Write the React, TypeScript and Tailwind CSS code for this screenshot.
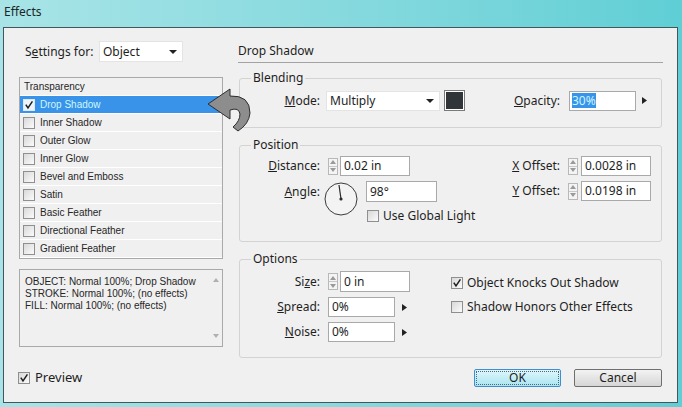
import React from 'react';

const effects = [
  'Drop Shadow',
  'Inner Shadow',
  'Outer Glow',
  'Inner Glow',
  'Bevel and Emboss',
  'Satin',
  'Basic Feather',
  'Directional Feather',
  'Gradient Feather',
];

function Check({ checked = false, light = false }: { checked?: boolean; light?: boolean }) {
  return (
    <span
      className={
        'flex w-[12px] h-[12px] shrink-0 items-center justify-center border ' +
        (light
          ? 'border-[#dfe9f3] bg-[#eef4fa]'
          : 'border-[#8e8f8f] bg-gradient-to-br from-[#d9d9d9] to-[#fbfbfb]')
      }
    >
      {checked && (
        <svg width="10" height="10" viewBox="0 0 10 10">
          <path d="M1.8 4.6 L4 8 L8.4 1.4" fill="none" stroke="#1f1f1f" strokeWidth="1.5" />
        </svg>
      )}
    </span>
  );
}

function Spinner() {
  return (
    <span className="flex flex-col w-[10px] h-[17px] border border-[#b8b8b8] bg-[#f4f4f4] shrink-0">
      <span className="flex flex-1 items-center justify-center border-b border-[#c8c8c8]">
        <svg width="6" height="4" viewBox="0 0 6 4">
          <path d="M0 4 L3 0 L6 4 Z" fill="#9a9a9a" />
        </svg>
      </span>
      <span className="flex flex-1 items-center justify-center">
        <svg width="6" height="4" viewBox="0 0 6 4">
          <path d="M0 0 L3 4 L6 0 Z" fill="#9a9a9a" />
        </svg>
      </span>
    </span>
  );
}

function Arrow() {
  return (
    <svg width="5" height="7" viewBox="0 0 5 7" className="shrink-0">
      <path d="M0 0 L5 3.5 L0 7 Z" fill="#222" />
    </svg>
  );
}

function Caret() {
  return (
    <svg width="8" height="4" viewBox="0 0 8 4" className="shrink-0">
      <path d="M0 0 L8 0 L4 4 Z" fill="#222" />
    </svg>
  );
}

function Field({ value, w, h = 'h-[20px]' }: { value: string; w: string; h?: string }) {
  return (
    <span className={`flex items-center ${w} ${h} border border-[#a9a9a9] bg-white pl-[3px] shrink-0`}>
      {value}
    </span>
  );
}

export default function App() {
  return (
    <div className="w-[682px] h-[407px] overflow-hidden bg-gradient-to-r from-[#a8e4e7] to-[#5fcfd5] font-['Noto_Sans',sans-serif] text-[12px] text-[#1e1e1e]">
      <div className="h-[27px] pl-[4px] pt-[4px] leading-[16px] text-[#1c2626]">Effects</div>

      <div className="relative ml-[3px] w-[675px] h-[376px] border border-[#43575a] bg-[#f0f0f0] pt-[13px] pl-[15px] pr-[14px]">
        <div className="flex gap-[15px] h-[328px]">
          {/* left column */}
          <div className="w-[204px] flex flex-col">
            <div className="flex items-center h-[21px]">
              <span className="w-[80px] pl-[6px]">
                S<span className="underline">e</span>ttings for:
              </span>
              <span className="flex items-center justify-between w-[84px] h-[21px] bg-white border border-[#e4e4e4] pl-[3px] pr-[5px]">
                Object
                <Caret />
              </span>
            </div>

            <div className="mt-[15px] border border-[#a9a9a9] bg-[#f0f0f0] font-['Liberation_Sans',sans-serif] text-[10px] text-[#262626]">
              <div className="flex items-center h-[18px] pl-[4px] border-b border-white">Transparency</div>
              {effects.map((name, i) => (
                <div
                  key={name}
                  className={
                    'flex items-center gap-[5px] h-[18px] pl-[3px] border-b border-white ' +
                    (i === 0 ? 'bg-[#3993e8] text-[#cdf7ff]' : '')
                  }
                >
                  <Check checked={i === 0} light={i === 0} />
                  {name}
                </div>
              ))}
            </div>

            <div className="mt-[10px] flex h-[78px] border border-[#a9a9a9] font-['Liberation_Sans',sans-serif] text-[10px] leading-[12px] text-[#262626]">
              <div className="flex-1 pl-[5px] pt-[6px]">
                <div>OBJECT: Normal 100%; Drop Shadow</div>
                <div>STROKE: Normal 100%; (no effects)</div>
                <div>FILL: Normal 100%; (no effects)</div>
              </div>
              <div className="flex flex-col justify-between items-center w-[12px] py-[8px]">
                <svg width="6" height="4" viewBox="0 0 6 4">
                  <path d="M0 4 L3 0 L6 4 Z" fill="#b0b0b0" />
                </svg>
                <svg width="6" height="4" viewBox="0 0 6 4">
                  <path d="M0 0 L3 4 L6 0 Z" fill="#b0b0b0" />
                </svg>
              </div>
            </div>
          </div>

          {/* right column */}
          <div className="w-[425px] flex flex-col">
            <div className="flex items-center h-[22px] pb-[1px] border-b border-[#a3a3a3]">Drop Shadow</div>

            <fieldset className="mt-[7px] mx-[1px] border border-[#d3d3d3] rounded-[3px] pt-[4px] pb-[16px]">
              <legend className="ml-[11px] px-[2px] leading-[16px]">Blending</legend>
              <div className="flex items-center h-[21px]">
                <span className="w-[80px] text-right">
                  <span className="underline">M</span>ode:
                </span>
                <span className="ml-[6px] flex items-center justify-between w-[114px] h-[20px] bg-white border border-[#e4e4e4] pl-[3px] pr-[5px]">
                  Multiply
                  <Caret />
                </span>
                <span className="ml-[4px] w-[21px] h-[21px] border border-[#7a7a7a] p-[1px] bg-white">
                  <span className="block w-full h-full bg-[#2f3539]" />
                </span>
                <span className="w-[95px] text-right">
                  <span className="underline">O</span>pacity:
                </span>
                <span className="ml-[9px] flex items-center w-[67px] h-[20px] border border-[#a9a9a9] bg-white pl-[2px]">
                  <span className="bg-[#3993e8] text-[#cdf7ff] leading-[15px]">30%</span>
                </span>
                <span className="ml-[6px]">
                  <Arrow />
                </span>
              </div>
            </fieldset>

            <fieldset className="mt-[9px] mx-[1px] border border-[#d3d3d3] rounded-[3px] pt-[3px] pb-[19px]">
              <legend className="ml-[11px] px-[2px] leading-[16px]">Position</legend>
              <div className="flex">
                <div className="flex flex-col">
                  <div className="flex items-center h-[20px]">
                    <span className="w-[80px] text-right">
                      <span className="underline">D</span>istance:
                    </span>
                    <span className="ml-[8px]">
                      <Spinner />
                    </span>
                    <span className="ml-[2px]">
                      <Field value="0.02 in" w="w-[70px]" />
                    </span>
                  </div>
                  <div className="flex items-start mt-[5px]">
                    <span className="w-[80px] text-right leading-[21px]">
                      <span className="underline">A</span>ngle:
                    </span>
                    <svg width="34" height="36" viewBox="0 0 34 36" className="ml-[4px] shrink-0">
                      <circle cx="17" cy="18" r="16" fill="#f3f3f3" stroke="#3a3a3a" strokeWidth="1" />
                      <line x1="17" y1="18" x2="15" y2="4" stroke="#2a2a2a" strokeWidth="1.2" />
                      <circle cx="17" cy="18" r="1.6" fill="#2a2a2a" />
                    </svg>
                    <div className="ml-[8px] flex flex-col">
                      <Field value="98°" w="w-[71px]" h="h-[21px]" />
                      <div className="mt-[8px] ml-[1px] flex items-center gap-[4px] h-[12px]">
                        <Check />
                        Use Global Light
                      </div>
                    </div>
                  </div>
                </div>

                <div className="ml-auto mr-[10px] flex flex-col">
                  <div className="flex items-center h-[20px] justify-end">
                    <span>
                      <span className="underline">X</span> Offset:
                    </span>
                    <span className="ml-[8px]">
                      <Spinner />
                    </span>
                    <span className="ml-[3px]">
                      <Field value="0.0028 in" w="w-[70px]" />
                    </span>
                  </div>
                  <div className="flex items-center h-[20px] mt-[5px] justify-end">
                    <span>
                      <span className="underline">Y</span> Offset:
                    </span>
                    <span className="ml-[8px]">
                      <Spinner />
                    </span>
                    <span className="ml-[3px]">
                      <Field value="0.0198 in" w="w-[70px]" />
                    </span>
                  </div>
                </div>
              </div>
            </fieldset>

            <fieldset className="mt-[9px] mx-[1px] border border-[#d3d3d3] rounded-[3px] pt-[4px] pb-[15px]">
              <legend className="ml-[11px] px-[2px] leading-[16px]">Options</legend>
              <div className="flex">
                <div className="flex flex-col">
                  <div className="flex items-center h-[21px]">
                    <span className="w-[80px] text-right">
                      Si<span className="underline">z</span>e:
                    </span>
                    <span className="ml-[8px]">
                      <Spinner />
                    </span>
                    <span className="ml-[2px]">
                      <Field value="0 in" w="w-[70px]" h="h-[21px]" />
                    </span>
                  </div>
                  <div className="flex items-center h-[20px] mt-[5px]">
                    <span className="w-[80px] text-right">
                      <span className="underline">S</span>pread:
                    </span>
                    <span className="ml-[8px]">
                      <Field value="0%" w="w-[67px]" />
                    </span>
                    <span className="ml-[7px]">
                      <Arrow />
                    </span>
                  </div>
                  <div className="flex items-center h-[20px] mt-[5px]">
                    <span className="w-[80px] text-right">
                      <span className="underline">N</span>oise:
                    </span>
                    <span className="ml-[8px]">
                      <Field value="0%" w="w-[67px]" />
                    </span>
                    <span className="ml-[7px]">
                      <Arrow />
                    </span>
                  </div>
                </div>

                <div className="ml-[41px] pt-[6px] flex flex-col gap-[12px]">
                  <div className="flex items-center gap-[4px] h-[12px]">
                    <Check checked />
                    Object Knocks Out Shadow
                  </div>
                  <div className="flex items-center gap-[4px] h-[12px]">
                    <Check />
                    Shadow Honors Other Effects
                  </div>
                </div>
              </div>
            </fieldset>
          </div>
        </div>

        <div className="flex items-center justify-between h-[18px] -ml-[1px] mr-[1px]">
          <div className="flex items-center gap-[5px] text-[13px]">
            <Check checked />
            Preview
          </div>
          <div className="flex gap-[13px]">
            <button className="w-[87px] h-[18px] border border-[#3d8fd3] rounded-[2px] bg-gradient-to-b from-[#dff6fb] to-[#a9e5f1] p-[1px]">
              <span className="flex items-center justify-center w-full h-full border border-dotted border-[#4a6a7a] leading-none">
                OK
              </span>
            </button>
            <button className="w-[88px] h-[18px] border border-[#6f6f6f] rounded-[2px] bg-gradient-to-b from-[#f3f3f3] to-[#d6d6d6] leading-none">
              Cancel
            </button>
          </div>
        </div>

        {/* pointer arrow overlay */}
        <svg width="46" height="48" viewBox="0 0 46 48" className="absolute left-[203px] top-[58px]">
          <path
            d="M1 18 L23 3 L23 10 Q43 9 43 27 Q42 38 31 45 L26 41 Q33 35 33 28 Q32 21 23 24 L23 33 Z"
            fill="#8d8d8d"
            stroke="#2e2e2e"
            strokeWidth="1"
          />
        </svg>
      </div>
    </div>
  );
}
